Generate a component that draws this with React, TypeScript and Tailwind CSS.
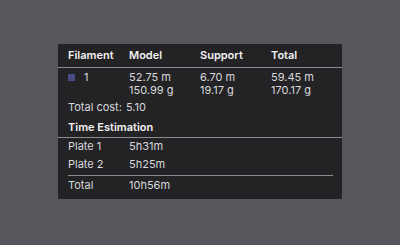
import React from "react";

const filaments = [
  { id: "1", color: "bg-[#4b4a85]", model: ["52.75 m", "150.99 g"], support: ["6.70 m", "19.17 g"], total: ["59.45 m", "170.17 g"] },
];

const plates = [
  { name: "Plate 1", time: "5h31m" },
  { name: "Plate 2", time: "5h25m" },
];

const cols = "grid grid-cols-[61px_71px_71px_1fr] pl-[10px]";

function App() {
  return (
    <div className="h-screen w-full bg-[#57565c] flex items-center justify-center pb-[2px] font-['Inter','Noto_Sans',sans-serif] text-[11px] leading-[13px]">
      <div className="w-[284px] bg-[#232326] flex flex-col">
        <div className={`${cols} h-[24px] items-center font-semibold text-[#f2f2f2] border-b border-[#8d8d91]`}>
          <span>Filament</span>
          <span>Model</span>
          <span>Support</span>
          <span>Total</span>
        </div>

        {filaments.map((f) => (
          <div key={f.id} className={`${cols} pt-[3px] text-[#d9d9db]`}>
            <div className="flex items-center h-[13px] gap-[9px]">
              <span className={`size-[7px] ${f.color}`} />
              <span>{f.id}</span>
            </div>
            <div className="flex flex-col">{f.model.map((v) => <span key={v}>{v}</span>)}</div>
            <div className="flex flex-col">{f.support.map((v) => <span key={v}>{v}</span>)}</div>
            <div className="flex flex-col">{f.total.map((v) => <span key={v}>{v}</span>)}</div>
          </div>
        ))}

        <div className="pl-[10px] mt-[4px] text-[#d9d9db] flex gap-[4px]">
          <span>Total cost:</span>
          <span>5.10</span>
        </div>

        <div className="pl-[10px] mt-[7px] pb-[3px] font-semibold text-[#f2f2f2] border-b border-[#8d8d91]">
          Time Estimation
        </div>

        <div className="pl-[10px] pr-[9px] pt-[2px] text-[#d9d9db] flex flex-col">
          <div className="flex flex-col gap-[5px] pb-[4px] border-b border-[#8d8d91]">
            {plates.map((p) => (
              <div key={p.name} className="grid grid-cols-[61px_1fr]">
                <span>{p.name}</span>
                <span>{p.time}</span>
              </div>
            ))}
          </div>
          <div className="grid grid-cols-[61px_1fr] pt-[3px] pb-[7px]">
            <span>Total</span>
            <span>10h56m</span>
          </div>
        </div>
      </div>
    </div>
  );
}

export default App;
